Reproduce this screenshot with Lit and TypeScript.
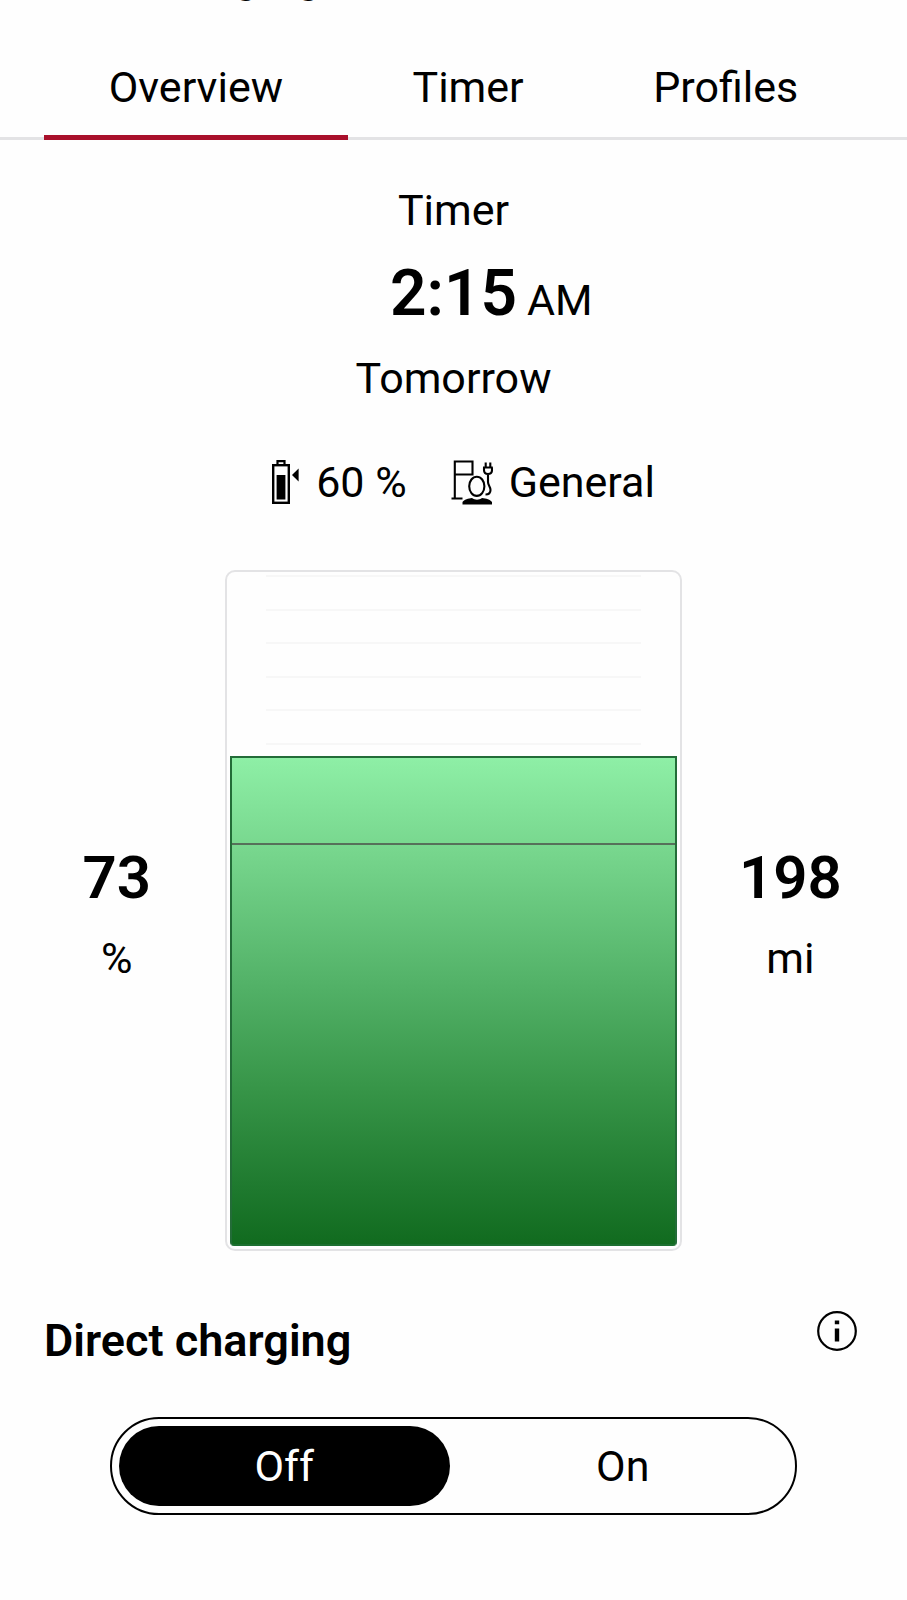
import { LitElement, html, css, svg } from "lit";
import { customElement, state } from "lit/decorators.js";

const TABS = ["Overview", "Timer", "Profiles"];
const TICKS = Array.from({ length: 20 });

const batteryIcon = svg`
  <svg class="icon" viewBox="0 0 28 44" width="28" height="44" aria-hidden="true">
    <path d="M5.5 5V1.2h7V5" fill="none" stroke="#000" stroke-width="2.2" />
    <rect x="1.2" y="5.2" width="15.6" height="37.6" fill="none" stroke="#000" stroke-width="2.4" />
    <rect x="4.6" y="15" width="8.8" height="24.5" />
    <path d="M20 15l6.6-6.4v12.8z" />
  </svg>`;

const profileIcon = svg`
  <svg class="icon" viewBox="0 0 42 45" width="42" height="45" aria-hidden="true">
    <g fill="none" stroke="#000" stroke-width="2.1">
      <path d="M3.800 38.500V1.500H21.500v13H3.800M0.500 38.500H11.500" />
      <ellipse cx="25.800" cy="26.300" rx="7.600" ry="9.600" />
      <path d="M32 7.500h9.800M34.700 2.500v5M39.300 2.500v5M33 7.500v2.500c0 2.500 1.500 4 4 4s4-1.500 4-4V7.500M37 14v8c0 3.500 2.500 4.500 2.500 8 0 3-2 4.500-5 4.500" />
    </g>
    <path d="M11.500 44.500V42c1.500-2.500 6-3.500 9.500-4 3 2.200 7 2.200 10 0 4 .5 8.500 1.500 10 4v2.500z" />
  </svg>`;

const infoIcon = svg`
  <svg class="icon" viewBox="0 0 40 40" width="40" height="40" aria-hidden="true">
    <circle cx="20" cy="20" r="18.800" fill="none" stroke="#000" stroke-width="2.200" />
    <path d="M17.800 9.500h4.400v3.800h-4.400zM17.800 17.500h4.400v13h-4.400z" />
  </svg>`;

@customElement("app-root")
export class AppRoot extends LitElement {
  @state() private tab = "Overview";
  @state() private direct = "Off";
  private charge = 73;
  private target = 60;

  static styles = css`
    :host {
      display: block;
      min-height: 100vh;
      background: #fefefe;
      color: #000;
      font-family: Roboto, sans-serif;
      font-size: 43px;
      line-height: 56px;
    }
    * { box-sizing: border-box; }
    button {
      margin: 0;
      border: 0;
      padding: 0;
      background: none;
      color: inherit;
      font: inherit;
    }
    h1, h2, p { margin: 0; }
    .icon { display: block; }
    .topbar {
      display: flex;
      align-items: flex-end;
      height: 3px;
      padding-left: 139px;
      overflow: hidden;
    }
    .title, .section-title {
      font-size: 45px;
      line-height: 60px;
      font-weight: 600;
    }
    .title { line-height: 52px; }
    .tabs {
      display: flex;
      padding: 56px 44px 0;
      box-shadow: inset 0 -3px #e3e3e5;
    }
    .tab {
      flex: 1 1 auto;
      padding-bottom: 20px;
      border-bottom: 5px solid transparent;
    }
    .tab.active { border-color: #a9102b; }
    .timer {
      display: flex;
      flex-direction: column;
      gap: 20px;
      padding-top: 42px;
      text-align: center;
    }
    .time {
      display: grid;
      grid-template-columns: 1fr auto 1fr;
      align-items: baseline;
      column-gap: 10px;
    }
    .clock {
      grid-column: 2;
      font-size: 64px;
      line-height: 72px;
      font-weight: 600;
    }
    .ampm { text-align: left; }
    .facts {
      display: flex;
      justify-content: center;
      gap: 44px;
      padding: 28px 0 0 20px;
    }
    .fact { display: flex; align-items: center; gap: 16px; }
    .level {
      display: grid;
      grid-template-columns: 1fr 2.1fr 1fr;
      align-items: center;
      padding: 60px 8px;
    }
    .reading { padding-top: 6px; text-align: center; }
    .value {
      font-size: 60px;
      line-height: 72px;
      font-weight: 600;
      padding-bottom: 16px;
    }
    .battery {
      display: grid;
      aspect-ratio: 67 / 100;
      padding: 3px;
      border: 2px solid #e3e3e5;
      border-radius: 10px;
    }
    .ticks, .fill, .target { grid-area: 1 / 1; }
    .ticks {
      display: flex;
      flex-direction: column;
      padding: 0 8%;
    }
    .tick { flex: 1; border-top: 2px solid #f7f7f7; }
    .fill {
      align-self: end;
      border: 2px solid #236c38;
      border-bottom-color: #1c7030;
      border-radius: 0 0 4px 4px;
      background: linear-gradient(#8eefa6, #76d58c 20%, #52b167 47%, #379548 68%, #1f7a2f 88%, #116b1f);
    }
    .target {
      align-self: end;
      margin: 0 2px;
      border-top: 2px solid #56705a;
    }
    .direct { padding: 0 44px; }
    .direct-head {
      display: flex;
      align-items: flex-start;
      justify-content: space-between;
      padding-right: 6px;
    }
    .switch {
      display: flex;
      gap: 8px;
      margin: 46px 66px 0;
      border: 2px solid #000;
      border-radius: 49px;
      padding: 7px;
    }
    .option {
      position: relative;
      flex: 1;
      padding: 12px 0;
      border-radius: 40px;
      text-align: center;
    }
    .option.on { background: #000; color: #fff; }
    .radio {
      position: absolute;
      inset: 0;
      width: 100%;
      height: 100%;
      margin: 0;
      opacity: 0;
    }
  `;

  render() {
    return html`
      <header class="topbar"><h1 class="title">Charging</h1></header>
      <nav class="tabs" role="tablist">
        ${TABS.map(
          (name) => html`<button
            class="tab ${this.tab === name ? "active" : ""}"
            role="tab"
            aria-selected=${this.tab === name}
            @click=${() => (this.tab = name)}
          >${name}</button>`
        )}
      </nav>
      <section class="timer">
        <p>Timer</p>
        <p class="time"><span class="clock">2:15</span><span class="ampm">AM</span></p>
        <p>Tomorrow</p>
        <div class="facts">
          <span class="fact">${batteryIcon}<span>${this.target} %</span></span>
          <span class="fact">${profileIcon}<span>General</span></span>
        </div>
      </section>
      <section class="level">
        <div class="reading"><p class="value">${this.charge}</p><p>%</p></div>
        <div class="battery">
          <div class="ticks">${TICKS.map(() => html`<div class="tick"></div>`)}</div>
          <div class="fill" style="height:${this.charge}%"></div>
          <div class="target" style="height:${this.target}%"></div>
        </div>
        <div class="reading"><p class="value">198</p><p>mi</p></div>
      </section>
      <section class="direct">
        <div class="direct-head">
          <h2 class="section-title" id="direct-title">Direct charging</h2>
          <button aria-label="About direct charging">${infoIcon}</button>
        </div>
        <div class="switch" role="radiogroup" aria-labelledby="direct-title">
          ${["Off", "On"].map(
            (name) => html`<label class="option ${this.direct === name ? "on" : ""}">
              <input
                class="radio"
                type="radio"
                name="direct"
                .checked=${this.direct === name}
                @change=${() => (this.direct = name)}
              />${name}</label>`
          )}
        </div>
      </section>
    `;
  }
}
